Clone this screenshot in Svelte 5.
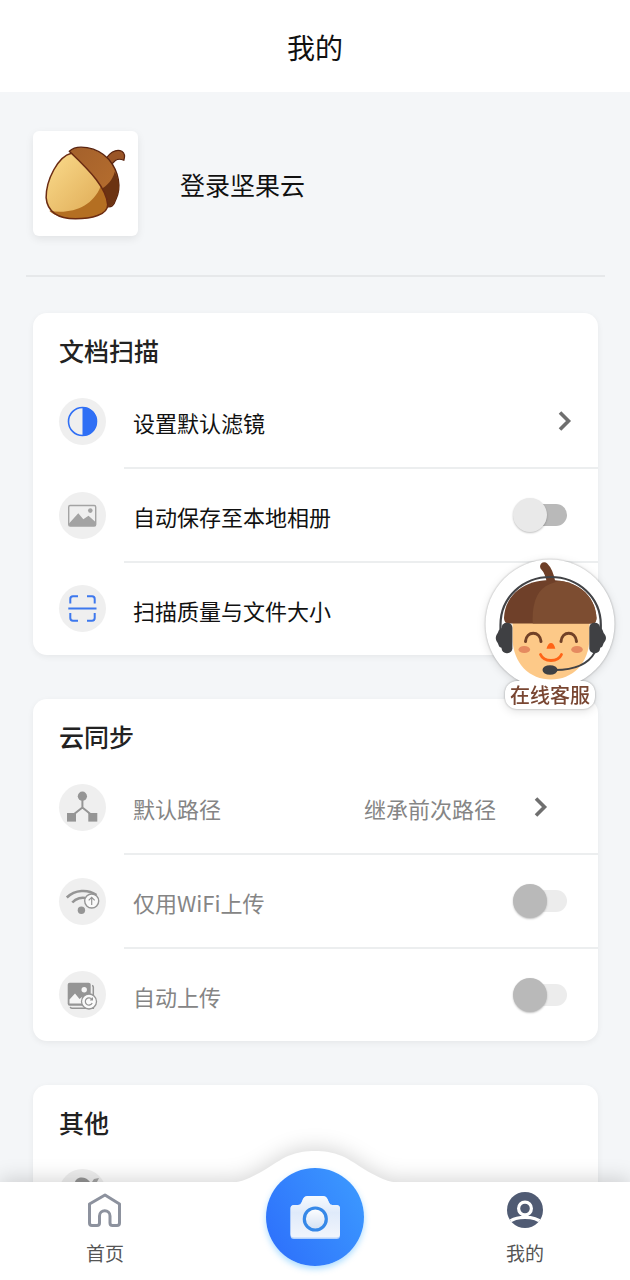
<script lang="ts">
  let saveToAlbum = $state(false);
  let wifiOnly = $state(false);
  let autoUpload = $state(false);
</script>

{#snippet chevron()}
  <svg class="chevron" viewBox="0 0 14 22" aria-hidden="true">
    <path d="M2 2.5 L10.5 11 L2 19.5" fill="none" stroke="#6f6f6f" stroke-width="3.6" />
  </svg>
{/snippet}

<div class="app">
  <header>
    <h1>我的</h1>
  </header>

  <main>
    <a class="profile" href="#login">
      <span class="avatar">
        <svg viewBox="0 0 104 104" aria-hidden="true">
          <defs>
            <linearGradient id="nut" x1="0" y1="0" x2="1" y2="1">
              <stop offset="0" stop-color="#fbdc8d" />
              <stop offset="1" stop-color="#dca650" />
            </linearGradient>
            <linearGradient id="nutCap" x1="0" y1="0" x2="1" y2="1">
              <stop offset="0" stop-color="#a3602b" />
              <stop offset="1" stop-color="#b9702f" />
            </linearGradient>
          </defs>
          <path d="M71 30 C75 22 82 17 88 20 C91 22 91 26 90 29 C83 26 79 30 77 36 Z" fill="#9a5527" stroke="#5a2410" stroke-width="1.2" />
          <path d="M36 20 C43 13 63 15 75 28 C85 40 88 56 82 68 C80 74 78 76 73 75 C66 58 55 40 36 20 Z" fill="url(#nutCap)" stroke="#5a2410" stroke-width="1.3" />
          <path d="M81 40 C86 50 87 58 82 67 C80 73 78 75 74 74 C73 68 70 64 67 58 C73 54 79 49 81 40 Z" fill="#6c3312" />
          <path d="M38 22 C25 25 13 48 13 66 C14 80 25 87 42 87 C58 87 74 83 74 73 C73 57 57 40 38 22 Z" fill="url(#nut)" />
          <path d="M67 55 C72 62 74 68 74 73 C74 83 58 87 42 87 C29 87 20 83 16 79 C38 83 59 75 67 55 Z" fill="#b46f22" />
          <path d="M38 22 C25 25 13 48 13 66 C14 80 25 87 42 87 C58 87 74 83 74 73 C73 57 57 40 38 22 Z" fill="none" stroke="#6b2b12" stroke-width="1.5" />
        </svg>
      </span>
      <span class="login">登录坚果云</span>
    </a>

    <section class="card">
      <h2>文档扫描</h2>
      <ul>
        <li>
          <svg class="icon" viewBox="0 0 47 47" aria-hidden="true">
            <circle cx="23.5" cy="23.5" r="14" fill="none" stroke="#2f6ff5" stroke-width="1.6" />
            <path d="M23.5 9 a14.5 14.5 0 0 1 0 29 Z" fill="#2f6ff5" />
          </svg>
          <button class="row" type="button">
            <span class="label">设置默认滤镜</span>
            {@render chevron()}
          </button>
        </li>
        <li>
          <svg class="icon" viewBox="0 0 47 47" aria-hidden="true">
            <rect x="9.7" y="13.5" width="27" height="20.5" rx="1.5" fill="none" stroke="#a3a3a3" stroke-width="1.4" />
            <path d="M10 31.5 L19.3 21.3 L24.3 27.2 L29.5 23.8 L36.5 30 V34 H10 Z" fill="#a3a3a3" />
            <circle cx="31.3" cy="18.6" r="2.3" fill="#a3a3a3" />
          </svg>
          <label class="row">
            <span class="label">自动保存至本地相册</span>
            <input class="switch" type="checkbox" bind:checked={saveToAlbum} />
          </label>
        </li>
        <li>
          <svg class="icon" viewBox="0 0 47 47" aria-hidden="true">
            <g fill="none" stroke="#3d78ee" stroke-width="2">
              <path d="M11.3 18.5 V14 Q11.3 11.3 14 11.3 H19" />
              <path d="M28 11.3 H33 Q35.7 11.3 35.7 14 V18.5" />
              <path d="M11.3 28 V33 Q11.3 35.7 14 35.7 H19" />
              <path d="M28 35.7 H33 Q35.7 35.7 35.7 33 V28" />
              <path d="M9.3 23.4 H37.5" />
            </g>
          </svg>
          <button class="row" type="button">
            <span class="label">扫描质量与文件大小</span>
          </button>
        </li>
      </ul>
    </section>

    <section class="card muted">
      <h2>云同步</h2>
      <ul>
        <li>
          <svg class="icon" viewBox="0 0 47 47" aria-hidden="true">
            <path d="M23.4 12 V24 M12 32.5 L23.4 23.5 L34.5 32.5" fill="none" stroke="#959595" stroke-width="2" />
            <circle cx="23.4" cy="12.2" r="4.6" fill="#959595" />
            <rect x="8" y="29" width="9" height="8.6" fill="#959595" />
            <rect x="29.3" y="29" width="9" height="8.6" fill="#959595" />
          </svg>
          <button class="row with-value" type="button" disabled>
            <span class="label">默认路径</span>
            <span class="value">继承前次路径</span>
            {@render chevron()}
          </button>
        </li>
        <li>
          <svg class="icon" viewBox="0 0 47 47" aria-hidden="true">
            <path d="M7.8 19.5 C16 11.5 29 11 37.5 17" fill="none" stroke="#959595" stroke-width="2.6" />
            <path d="M13.3 24.5 C17 20.3 23 18.8 28 20.5" fill="none" stroke="#959595" stroke-width="2.6" />
            <circle cx="22.4" cy="32.3" r="3.7" fill="#959595" />
            <circle cx="32.7" cy="23" r="7" fill="#fafafa" stroke="#959595" stroke-width="1.4" />
            <path d="M32.7 27 V19.5 M29.7 22.3 L32.7 19.3 L35.7 22.3" fill="none" stroke="#959595" stroke-width="1.2" />
          </svg>
          <label class="row">
            <span class="label">仅用WiFi上传</span>
            <input class="switch" type="checkbox" disabled bind:checked={wifiOnly} />
          </label>
        </li>
        <li>
          <svg class="icon" viewBox="0 0 47 47" aria-hidden="true">
            <path d="M33 14.5 Q34.3 14.7 34.3 16 V37.2 H13 Q11.5 37.2 11.2 35.8" fill="none" stroke="#959595" stroke-width="1.5" />
            <rect x="8.7" y="11.7" width="23" height="23" rx="2" fill="#959595" />
            <circle cx="25.2" cy="18.7" r="2.7" fill="#f5f5f5" />
            <path d="M10.5 32.5 V28.5 L16 22.6 L20.5 28 L23 26 V32.5 Z" fill="#f5f5f5" />
            <circle cx="30" cy="30.5" r="7.5" fill="#fafafa" stroke="#959595" stroke-width="1.3" />
            <path d="M33.2 32 A3.6 3.6 0 1 1 32.8 28.3 M33.4 26.6 V29 H31" fill="none" stroke="#959595" stroke-width="1.2" />
          </svg>
          <label class="row">
            <span class="label">自动上传</span>
            <input class="switch" type="checkbox" disabled bind:checked={autoUpload} />
          </label>
        </li>
      </ul>
    </section>

    <section class="card">
      <h2>其他</h2>
      <ul>
        <li>
          <svg class="icon" viewBox="0 0 47 47" aria-hidden="true">
            <path d="M16 13 C17 8 26 6 31 13 Z" fill="#959595" />
            <path d="M33 13 L35 10 L40 9 L38 13 Z" fill="#a5a5a5" />
          </svg>
        </li>
      </ul>
    </section>
  </main>

  <button class="service" type="button">
    <svg viewBox="0 0 130 130" aria-hidden="true">
      <defs>
        <clipPath id="capClip">
          <path d="M24 64.5 Q19 64.5 19 59 C20 35 40 21 65.3 21 C91 21 110 35 111.5 59 Q111.5 64.5 107 64.5 Z" />
        </clipPath>
      </defs>
      <circle cx="65" cy="65" r="64.5" fill="#fff" />
      <path d="M27.5 60 H104.5 V78 C104.5 105 87 120.5 66 120.5 C45 120.5 27.5 105 27.5 78 Z" fill="#fdc988" />
      <path d="M59.3 7.5 Q64 12 66.3 24" fill="none" stroke="#6d3e27" stroke-width="8.5" stroke-linecap="round" />
      <g clip-path="url(#capClip)">
        <rect x="15" y="18" width="100" height="50" fill="#6f4029" />
        <path d="M48 68 C46 45 52 30 65 25 L85 18 H115 V68 Z" fill="#7d4d31" />
      </g>
      <path d="M15.5 70 V66 C15.5 38 38 18 65.5 18 C93 18 115.8 38 115.8 66 V70" fill="none" stroke="#424346" stroke-width="2.2" />
      <rect x="16.6" y="63.7" width="10.8" height="30.5" rx="5" fill="#3f4043" />
      <path d="M18 69 C13 69 14 73 12 75 Q9.5 79 12 83 C14 85 13 89 18 89 Z" fill="#3f4043" />
      <rect x="104.3" y="63.7" width="10.8" height="30.5" rx="5" fill="#3f4043" />
      <path d="M114 69 C118.5 69 117.5 73 119.5 75 Q122.5 79 119.5 83 C117.5 85 118.5 89 114 89 Z" fill="#3f4043" />
      <g fill="none" stroke-linecap="round">
        <path d="M40.5 82.5 C41.5 71.5 55 71.5 56 82.5" stroke="#714127" stroke-width="3" />
        <path d="M76 82.5 C77 71.5 90.5 71.5 91.5 82.5" stroke="#714127" stroke-width="3" />
        <path d="M55.5 95.5 C59 103.5 73 103.5 76.5 95.5" stroke="#ff6417" stroke-width="2.8" />
        <path d="M110 93 C104 104 92 111 70 111" stroke="#424346" stroke-width="1.8" />
      </g>
      <path d="M61.5 89.7 Q63 84 66 84 Q69 84 70.3 89.7 Z" fill="#ff6417" />
      <ellipse cx="39.3" cy="90.5" rx="5.8" ry="3.6" fill="#e58a60" />
      <ellipse cx="92" cy="90.5" rx="5.8" ry="3.6" fill="#e58a60" />
      <ellipse cx="65" cy="111" rx="7.5" ry="4.8" fill="#3f4043" />
    </svg>
    <span>在线客服</span>
  </button>

  <nav>
    <svg class="hump" viewBox="0 0 170 32" aria-hidden="true">
      <path d="M0 32 C22 31 44 11 58 5 C68 1 76 0 85 0 C94 0 102 1 112 5 C126 11 148 31 170 32 Z" fill="#fff" />
    </svg>
    <a class="tab" href="#home">
      <svg viewBox="0 0 36 36" aria-hidden="true">
        <path d="M18 3 L32.5 12 V31 Q32.5 33.5 30 33.5 H25.5 Q23 33.5 23 31 V24 C23 17 12.5 17 12.5 24 V31 Q12.5 33.5 10 33.5 H5 Q2.5 33.5 2.5 31 V12 Z" fill="none" stroke="#8d929e" stroke-width="3" stroke-linejoin="round" />
      </svg>
      <span>首页</span>
    </a>
    <button class="camera" type="button" aria-label="拍照">
      <svg viewBox="0 0 98 98" aria-hidden="true">
        <defs>
          <linearGradient id="body" x1="0" y1="0" x2="0" y2="1">
            <stop offset="0" stop-color="#f7fafe" />
            <stop offset="0.4" stop-color="#dfeafa" />
            <stop offset="1" stop-color="#f1f5fc" />
          </linearGradient>
          <linearGradient id="lens" x1="0" y1="0" x2="0" y2="1">
            <stop offset="0" stop-color="#fff" />
            <stop offset="1" stop-color="#d3e0f3" />
          </linearGradient>
        </defs>
        <path d="M28 37 H32 Q34.5 37 35.5 34.5 L37 31 Q38.5 28 41.5 28 H57 Q60 28 61.5 31 L63 34.5 Q64 37 66.5 37 H70.5 Q74 37 74 40.5 V67.5 Q74 71 70.5 71 H28 Q24.5 71 24.5 67.5 V40.5 Q24.5 37 28 37 Z" fill="#b5d2fb" />
        <path d="M28 37 H32 Q34.5 37 35.5 34.5 L37 31 Q38.5 28 41.5 28 H57 Q60 28 61.5 31 L63 34.5 Q64 37 66.5 37 H70.5 Q74 37 74 40.5 V66 Q74 69.5 70.5 69.5 H28 Q24.5 69.5 24.5 66 V40.5 Q24.5 37 28 37 Z" fill="url(#body)" />
        <circle cx="49.3" cy="51" r="11" fill="url(#lens)" stroke="#3688e8" stroke-width="3.2" />
      </svg>
    </button>
    <a class="tab" href="#mine" aria-current="page">
      <svg viewBox="0 0 36 36" aria-hidden="true">
        <defs>
          <clipPath id="userClip"><circle cx="18" cy="18" r="18" /></clipPath>
        </defs>
        <g clip-path="url(#userClip)">
          <rect width="36" height="36" fill="#505b73" />
          <circle cx="18" cy="16.5" r="6.4" fill="none" stroke="#fff" stroke-width="3.2" />
          <path d="M1 31 C8 23.5 28 23.5 35 31" fill="none" stroke="#fff" stroke-width="3.2" />
        </g>
      </svg>
      <span>我的</span>
    </a>
  </nav>
</div>

<style>
  :global(body) {
    margin: 0;
    background: #f4f6f8;
  }

  .app {
    display: flex;
    flex-direction: column;
    height: 100vh;
    overflow: hidden;
    color: #111;
    font-family: "Noto Sans CJK SC", "Noto Sans", sans-serif;
    font-size: 22px;
  }

  h1, h2, ul {
    margin: 0;
    padding: 0;
  }

  button {
    padding: 0;
    border: 0;
    background: none;
    color: inherit;
    font: inherit;
    text-align: left;
    cursor: pointer;
  }

  a {
    color: inherit;
    text-decoration: none;
  }

  svg {
    display: block;
  }

  header {
    flex: none;
    padding: 23px 0 21px;
    background: #fff;
    text-align: center;
  }

  h1 {
    font-size: 28px;
    font-weight: 400;
    line-height: 48px;
  }

  main {
    flex: 1;
    min-height: 0;
    overflow-y: auto;
    scrollbar-width: none;
    padding: 0 32px 0 33px;
  }

  .profile {
    display: flex;
    align-items: center;
    gap: 42px;
    margin: 0 -7px;
    padding: 39px 7px;
    border-bottom: 2px solid #e6e8ea;
  }

  .avatar {
    width: 105px;
    border-radius: 6px;
    background: #fff;
    box-shadow: 0 3px 8px rgba(0, 0, 0, 0.08);
  }

  .login {
    font-size: 25px;
    line-height: 36px;
  }

  .card {
    margin-top: 44px;
    border-radius: 14px;
    background: #fff;
    box-shadow: 0 2px 6px rgba(0, 0, 0, 0.06);
  }

  .profile + .card {
    margin-top: 36px;
  }

  h2 {
    padding: 19px 26px 7px;
    color: #222;
    font-size: 25px;
    font-weight: 500;
    line-height: 36px;
  }

  ul {
    list-style: none;
  }

  li {
    display: flex;
    align-items: center;
    gap: 18px;
    height: 94px;
    padding-left: 26px;
  }

  li:last-child {
    height: 92px;
  }

  .icon {
    flex: none;
    width: 47px;
    height: 47px;
    margin-bottom: 2px;
    border-radius: 50%;
    background: #efefef;
  }

  .row {
    display: flex;
    flex: 1;
    align-items: center;
    align-self: stretch;
    padding: 0 26px 0 9px;
    border-bottom: 2px solid #eceeef;
  }

  label.row {
    padding-right: 31px;
  }

  .row.with-value {
    padding-right: 50px;
  }

  li:last-child .row {
    border-bottom: 0;
  }

  .label {
    flex: 1;
    padding-top: 2px;
    line-height: 32px;
  }

  .value {
    padding: 2px 38px 0 0;
    line-height: 32px;
  }

  .muted .row {
    color: #858585;
  }

  .chevron {
    width: 14px;
    height: 22px;
  }

  .switch {
    position: relative;
    width: 54px;
    height: 34px;
    margin: 0;
    appearance: none;
    cursor: pointer;
  }

  .switch::before {
    content: '';
    position: absolute;
    inset: 6px 0 6px 16px;
    border-radius: 11px;
    background: #b9b9b9;
  }

  .switch::after {
    content: '';
    position: absolute;
    top: 0;
    left: 0;
    width: 34px;
    height: 34px;
    border-radius: 50%;
    background: #e9e9e9;
    box-shadow: 0 1px 2px rgba(0, 0, 0, 0.25);
  }

  .switch:checked::after {
    left: 20px;
  }

  .switch:disabled::before {
    background: #ececec;
  }

  .switch:disabled::after {
    background: #b9b9b9;
  }

  .service {
    position: fixed;
    top: 559px;
    right: 15px;
    width: 130px;
    filter: drop-shadow(0 0 1px rgba(0, 0, 0, 0.3)) drop-shadow(0 2px 4px rgba(0, 0, 0, 0.12));
  }

  .service span {
    position: absolute;
    top: 122px;
    left: 20px;
    width: 90px;
    border-radius: 12px;
    background: #fff;
    color: #794632;
    font-size: 20px;
    font-weight: 500;
    line-height: 28px;
    text-align: center;
  }

  nav {
    position: relative;
    display: grid;
    flex: none;
    grid-template-columns: repeat(3, 1fr);
    justify-items: center;
    align-items: start;
    height: 98px;
    background: #fff;
    filter: drop-shadow(0 -3px 10px rgba(0, 0, 0, 0.16));
  }

  .hump {
    position: absolute;
    bottom: 97px;
    left: 50%;
    width: 170px;
    height: 32px;
    margin-left: -85px;
  }

  .tab {
    display: flex;
    flex-direction: column;
    align-items: center;
    gap: 11px;
    padding-top: 10px;
    color: #555;
    font-size: 19px;
    line-height: 28px;
  }

  .tab svg {
    width: 36px;
    height: 36px;
  }

  .camera {
    position: relative;
    width: 98px;
    height: 98px;
    margin-top: -14px;
    border-radius: 50%;
    background: linear-gradient(60deg, #2c6dfb, #3d9cff);
    box-shadow: 0 3px 6px rgba(70, 180, 255, 0.45);
  }
</style>
